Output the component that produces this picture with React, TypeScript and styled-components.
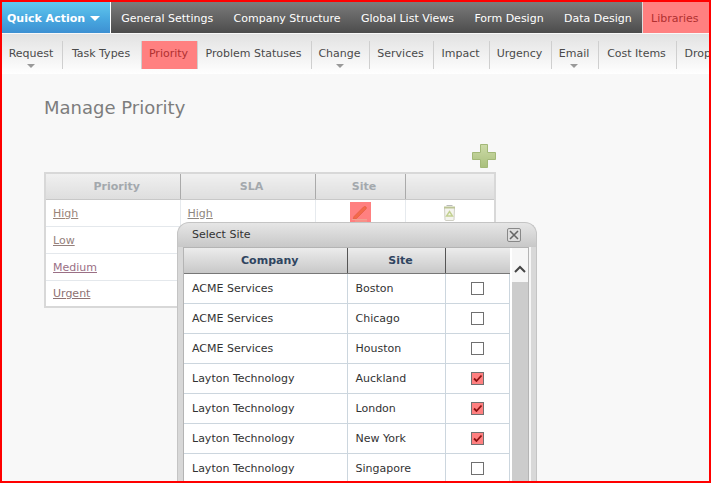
import React from "react";
import styled, { createGlobalStyle } from "styled-components";

const Global = createGlobalStyle`
  html, body { margin: 0; padding: 0; height: 100%; overflow: hidden; }
  * { box-sizing: border-box; }
`;
const Frame = styled.div`
  position: relative; width: 711px; height: 483px; border: 2px solid #ff0000;
  overflow: hidden; background: #f8f8f8; font-family: "DejaVu Sans", Verdana, sans-serif; font-size: 11px;
`;
const TopBar = styled.div`
  display: flex; height: 31px; width: 707px; background: linear-gradient(#7c7c7c, #4c4c4c);
`;
const QuickAction = styled.div`
  width: 109px; display: flex; align-items: center; gap: 5px; padding: 1px 0 0 5px; border-right: 1px solid #fff;
  color: #fff; font-weight: bold; font-size: 11px; flex: none;
  background: linear-gradient(#62c8ee, #48a8e0 55%, #3d90d2);
`;
const Caret = styled.span<{ $color: string }>`
  width: 0; height: 0; border-left: 5px solid transparent; border-right: 5px solid transparent;
  border-top: 5px solid ${(p) => p.$color};
`;
const TopItem = styled.div<{ $active?: boolean }>`
  display: flex; align-items: center; padding: 1px 10.2px 0; font-size: 11px; white-space: nowrap;
  color: ${(p) => (p.$active ? "#b03030" : "#fff")};
  ${(p) => p.$active && "background:#ff8080; border-left:1px solid #ddd; margin-left:auto; padding:1px 0 0 8px; width:67px;"}
`;
const SubBar = styled.div`
  display: flex; height: 40px; margin-top: 1px; padding-top: 7px; width: 707px; overflow: hidden;
  background: linear-gradient(#e2e2e2, #ffffff);
`;
const SubItem = styled.div<{ $w: number; $active?: boolean; $last?: boolean }>`
  position: relative; flex: none; width: ${(p) => p.$w}px; height: 28px; padding: 6px 2px 0 0; text-align: center;
  white-space: nowrap; font-size: 11px;
  color: ${(p) => (p.$active ? "#b03030" : "#4a4a4a")};
  background: ${(p) => (p.$active ? "#ff8080" : "transparent")};
  border-right: ${(p) => (p.$last ? "none" : "1px solid #cfcfcf")};
`;
const SubCaret = styled.span`
  position: absolute; left: 50%; top: 23px; margin-left: -5px; width: 0; height: 0;
  border-left: 4px solid transparent; border-right: 4px solid transparent; border-top: 4px solid #999;
`;
const Content = styled.div`
  padding: 23px 0 0 42px;
`;
const Title = styled.h1`
  margin: 0; font-size: 18px; font-weight: normal; color: #7d7d7d; line-height: 22px;
`;
const AddRow = styled.div`
  width: 452px; height: 28px; margin-top: 25px; display: flex; justify-content: flex-end;
`;
const Grid = styled.table`
  width: 452px; border-collapse: collapse; table-layout: fixed; background: #fff; margin-top: 0;
  border: 2px solid #d8d8d8;
`;
const Th = styled.th<{ $w?: number }>`
  height: 26px; padding: 0 0 0 8px; font-size: 11px; color: #a3a8ad; font-weight: bold;
  background: linear-gradient(#f0f0f0, #dedede); border-right: 1px solid #aaa; border-bottom: 1px solid #c8c8c8;
  width: ${(p) => (p.$w ? `${p.$w}px` : "auto")};
  &:last-child { border-right: none; }
`;
const Td = styled.td`
  height: 27px; padding: 1px 0 0 7px; border-right: 1px solid #e6eaee; border-bottom: 1px solid #e4e8ec;
  color: #8a8a8a; font-size: 11px;
  &:last-child { border-right: none; }
`;
const IconCell = styled(Td)`
  padding: 0; text-align: center; vertical-align: middle; line-height: 0;
`;
const RowLink = styled.span<{ $color?: string }>`
  color: ${(p) => p.$color ?? "#8e8680"}; text-decoration: underline;
`;
const EditBadge = styled.span`
  display: inline-flex; width: 21px; height: 21px; background: #ff8080; align-items: center; justify-content: center;
`;
const Modal = styled.div`
  position: absolute; left: 175px; top: 220px; width: 360px; height: 270px; border: 1px solid #c4c4c4;
  border-bottom: none; border-radius: 12px 12px 0 0; background: linear-gradient(#e6e6e6, #c8c8c8 24px, #d8d8d8 24px);
  padding: 0 8px 0 5px;
`;
const ModalHead = styled.div`
  height: 24px; display: flex; align-items: center; justify-content: space-between; padding: 0 8px 2px 9px;
  color: #333; font-size: 11px;
`;
const CloseBtn = styled.span`
  display: flex; width: 14px; height: 14px; border: 1px solid #888; border-radius: 2px; background: #ddd;
  align-items: center; justify-content: center; margin: 2px -1px 0 0;
`;
const ModalBody = styled.div`
  display: flex; height: 240px; background: #fff; border: 1px solid #b4b4b4; border-bottom: none; width: 346px;
  box-shadow: 2px 0 0 #f6f6f6;
`;
const SiteTable = styled.table`
  width: 326px; flex: none; border-collapse: collapse; table-layout: fixed; align-self: flex-start;
`;
const ModalTh = styled.th<{ $w?: number }>`
  height: 25px; padding: 0 0 0 9px; font-size: 11px; font-weight: bold; color: #2f4560;
  background: linear-gradient(#ececec, #c8c8c8); border-right: 1px solid #555; border-bottom: 1px solid #777;
  width: ${(p) => (p.$w ? `${p.$w}px` : "auto")};
  &:last-child { border-right: none; }
`;
const ModalTd = styled.td`
  height: 30px; padding: 1px 0 0 8px; color: #333; font-size: 11px; white-space: nowrap;
  border-right: 1px solid #ccd6de; border-bottom: 1px solid #ccd6de;
`;
const CheckTd = styled(ModalTd)`
  padding: 1px 0 0; text-align: center; line-height: 0;
`;
const CheckBox = styled.span<{ $on: boolean }>`
  display: inline-flex; width: 13px; height: 13px; border: 1px solid #707070; align-items: center; justify-content: center;
  background: ${(p) => (p.$on ? "#ff8080" : "#fff")};
`;
const ScrollBar = styled.div`
  width: 18px; flex: none; display: flex; flex-direction: column; padding-left: 2px; background: #fff;
`;
const ScrollUp = styled.div`
  height: 34px; display: flex; align-items: center; justify-content: center; padding-top: 7px; background: #f6f6f6;
`;
const ScrollThumb = styled.div`
  flex: 1; background: #cccccc;
`;

const subs: [string, number, boolean?][] = [
  ["Request", 61, true], ["Task Types", 79], ["Priority", 56], ["Problem Statuses", 114], ["Change", 58, true],
  ["Services", 64], ["Impact", 56], ["Urgency", 62], ["Email", 47, true], ["Cost Items", 78], ["Drop Downs", 84],
];
const rows: [string, string, boolean][] = [
  ["High", "High", true], ["Low", "", false], ["Medium", "", false], ["Urgent", "", false],
];
const sites: [string, string, boolean][] = [
  ["ACME Services", "Boston", false], ["ACME Services", "Chicago", false], ["ACME Services", "Houston", false],
  ["Layton Technology", "Auckland", true], ["Layton Technology", "London", true], ["Layton Technology", "New York", true],
  ["Layton Technology", "Singapore", false],
];
const linkColors: Record<string, string> = { High: "#9a8478", Low: "#94807c", Medium: "#9a6f85", Urgent: "#8e7272" };

const Plus = () => (
  <svg width="24" height="24" viewBox="0 0 24 24">
    <defs>
      <linearGradient id="plusFill" x1="0" y1="0" x2="0" y2="1">
        <stop offset="0" stopColor="#cddba8" />
        <stop offset="1" stopColor="#a9bf7c" />
      </linearGradient>
    </defs>
    <path d="M8.500 .5h7v8h8v7h-8v8h-7v-8h-8v-7h8z" fill="url(#plusFill)" stroke="#a3b878" strokeWidth="1" />
  </svg>
);
const Pencil = () => (
  <svg width="18" height="18" viewBox="0 0 18 18">
    <path d="M3 12.500 12.500 3c1-1 2.500-.5 2.800.5.200.7 0 1.300-.6 1.800L5.500 14.500l-3.500 1z" fill="#f26a4a" stroke="#e0573a" strokeWidth=".6" />
    <path d="M1 15.500h15M4 17h12" stroke="#f0a090" strokeWidth="1" />
  </svg>
);
const Bin = () => (
  <svg width="13" height="16" viewBox="0 0 13 16">
    <path d="M1.500 2.500h10l-.5 12.500a.8.8 0 0 1-.8.5H2.800a.8.8 0 0 1-.8-.5z" fill="#f4f4ee" stroke="#cfcfc4" />
    <path d="M1 2.500h11" stroke="#bcc496" strokeWidth="2" />
    <path d="M3.500 .5h6" stroke="#bbb" />
    <path d="M6.500 6.500 9.500 11h-6z" fill="none" stroke="#c2d090" strokeWidth="1.400" />
  </svg>
);
const Tick = () => (
  <svg width="11" height="11" viewBox="0 0 11 11">
    <path d="M2 5.500 4.500 8 9.500 2.500" fill="none" stroke="#8c1010" strokeWidth="1.800" />
  </svg>
);
const Cross = () => (
  <svg width="10" height="10" viewBox="0 0 10 10">
    <path d="M1 1l8 8M9 1 1 9" stroke="#666" strokeWidth="1.600" />
  </svg>
);
const Up = () => (
  <svg width="12" height="8" viewBox="0 0 12 8">
    <path d="M1 7 6 2l5 5" fill="none" stroke="#444" strokeWidth="2" />
  </svg>
);

export default function App() {
  return (
    <Frame>
      <Global />
      <TopBar>
        <QuickAction>Quick Action <Caret $color="#fff" /></QuickAction>
        {["General Settings", "Company Structure", "Global List Views", "Form Design", "Data Design"].map((t) => (
          <TopItem key={t}>{t}</TopItem>
        ))}
        <TopItem $active>Libraries</TopItem>
      </TopBar>
      <SubBar>
        {subs.map(([t, w, c], i) => (
          <SubItem key={t} $w={w} $active={t === "Priority"} $last={i === subs.length - 1}>
            {t}
            {c && <SubCaret />}
          </SubItem>
        ))}
      </SubBar>
      <Content>
        <Title>Manage Priority</Title>
        <AddRow><Plus /></AddRow>
        <Grid>
          <thead>
            <tr>
              <Th $w={135}>Priority</Th><Th $w={135}>SLA</Th><Th $w={90}>Site</Th><Th />
            </tr>
          </thead>
          <tbody>
            {rows.map(([a, b, icons]) => (
              <tr key={a}>
                <Td><RowLink $color={linkColors[a]}>{a}</RowLink></Td>
                <Td>{b && <RowLink>{b}</RowLink>}</Td>
                <IconCell>{icons && <EditBadge><Pencil /></EditBadge>}</IconCell>
                <IconCell>{icons && <Bin />}</IconCell>
              </tr>
            ))}
          </tbody>
        </Grid>
      </Content>
      <Modal>
        <ModalHead>Select Site<CloseBtn><Cross /></CloseBtn></ModalHead>
        <ModalBody>
          <SiteTable>
            <thead>
              <tr><ModalTh $w={163}>Company</ModalTh><ModalTh $w={98}>Site</ModalTh><ModalTh /></tr>
            </thead>
            <tbody>
              {sites.map(([c, s, on]) => (
                <tr key={s}>
                  <ModalTd>{c}</ModalTd>
                  <ModalTd>{s}</ModalTd>
                  <CheckTd><CheckBox $on={on}>{on && <Tick />}</CheckBox></CheckTd>
                </tr>
              ))}
            </tbody>
          </SiteTable>
          <ScrollBar>
            <ScrollUp><Up /></ScrollUp>
            <ScrollThumb />
          </ScrollBar>
        </ModalBody>
      </Modal>
    </Frame>
  );
}
